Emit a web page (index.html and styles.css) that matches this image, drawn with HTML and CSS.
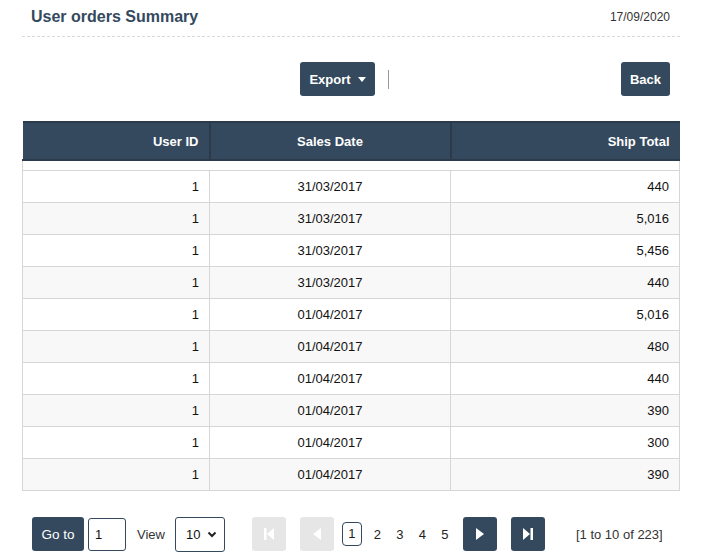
FILE: index.html
```html
<!DOCTYPE html>
<html>
<head>
<meta charset="utf-8">
<title>User orders Summary</title>
<link rel="stylesheet" href="styles.css">
</head>
<body>
<div class="page">
  <div class="title-bar">
    <h1 class="title">User orders Summary</h1>
    <span class="date">17/09/2020</span>
  </div>
  <div class="toolbar">
    <div class="tool-group">
      <button class="btn">Export <span class="caret"></span></button>
      <span class="sep"></span>
    </div>
    <button class="btn back">Back</button>
  </div>
  <table class="grid">
    <colgroup><col class="c1"><col class="c2"><col class="c3"></colgroup>
    <thead>
      <tr><th class="r">User ID</th><th class="c">Sales Date</th><th class="r">Ship Total</th></tr>
    </thead>
    <tbody>
      <tr class="spacer"><td colspan="3"></td></tr>
      <tr><td class="r">1</td><td class="c">31/03/2017</td><td class="r">440</td></tr>
      <tr><td class="r">1</td><td class="c">31/03/2017</td><td class="r">5,016</td></tr>
      <tr><td class="r">1</td><td class="c">31/03/2017</td><td class="r">5,456</td></tr>
      <tr><td class="r">1</td><td class="c">31/03/2017</td><td class="r">440</td></tr>
      <tr><td class="r">1</td><td class="c">01/04/2017</td><td class="r">5,016</td></tr>
      <tr><td class="r">1</td><td class="c">01/04/2017</td><td class="r">480</td></tr>
      <tr><td class="r">1</td><td class="c">01/04/2017</td><td class="r">440</td></tr>
      <tr><td class="r">1</td><td class="c">01/04/2017</td><td class="r">390</td></tr>
      <tr><td class="r">1</td><td class="c">01/04/2017</td><td class="r">300</td></tr>
      <tr><td class="r">1</td><td class="c">01/04/2017</td><td class="r">390</td></tr>
    </tbody>
  </table>
  <div class="pager">
    <button class="btn goto">Go to</button>
    <input class="page-input" type="text" value="1">
    <span class="view">View</span>
    <div class="select">10
      <svg class="chev" width="10" height="7" viewBox="0 0 10 7"><path d="M1.5 1.5 L5 5 L8.5 1.5" fill="none" stroke="#222" stroke-width="2"/></svg>
    </div>
    <button class="nav disabled first">
      <svg width="12" height="14" viewBox="0 0 12 14"><rect x="1" y="1" width="2.5" height="12" fill="#fff"/><path d="M11 1 L4 7 L11 13 Z" fill="#fff"/></svg>
    </button>
    <button class="nav disabled prev">
      <svg width="12" height="14" viewBox="0 0 12 14"><path d="M10 1 L2 7 L10 13 Z" fill="#fff"/></svg>
    </button>
    <div class="pages">
      <span class="pg active">1</span>
      <span class="pg">2</span>
      <span class="pg">3</span>
      <span class="pg">4</span>
      <span class="pg">5</span>
    </div>
    <button class="nav next">
      <svg width="12" height="14" viewBox="0 0 12 14"><path d="M2 1 L10 7 L2 13 Z" fill="#fff"/></svg>
    </button>
    <button class="nav last">
      <svg width="12" height="14" viewBox="0 0 12 14"><path d="M1 1 L8 7 L1 13 Z" fill="#fff"/><rect x="8.5" y="1" width="2.5" height="12" fill="#fff"/></svg>
    </button>
    <span class="count">[1 to 10 of 223]</span>
  </div>
</div>
</body>
</html>
```
FILE: styles.css
```css
* { box-sizing: border-box; }
body {
  margin: 0;
  background: #fff;
  font-family: "Liberation Sans", Arial, sans-serif;
  color: #222;
}
.page {
  padding: 0 31px 0 22px;
  width: 711px;
}
.title-bar {
  display: flex;
  justify-content: space-between;
  align-items: center;
  height: 37px;
  padding: 0 10px 2px 9px;
  border-bottom: 1px dashed #d9d9d9;
}
.title {
  margin: 0;
  font-size: 16px;
  font-weight: bold;
  color: #34495e;
}
.date {
  font-size: 12px;
  color: #333;
}
.toolbar {
  display: flex;
  justify-content: space-between;
  align-items: center;
  margin-top: 25px;
  padding-right: 10px;
}
.tool-group {
  display: flex;
  align-items: center;
  margin-left: 278px;
}
.btn {
  background: #34495e;
  color: #fff;
  border: 0;
  border-radius: 3px;
  height: 34px;
  font-family: "Liberation Sans", Arial, sans-serif;
  font-size: 13px;
  font-weight: bold;
  padding: 0 12px;
  display: inline-flex;
  align-items: center;
}
.caret {
  display: inline-block;
  width: 0; height: 0;
  border-left: 4px solid transparent;
  border-right: 4px solid transparent;
  border-top: 5px solid #fff;
  margin-left: 7px;
}
.toolbar .btn:first-child { width: 75px; justify-content: center; }
.sep {
  display: inline-block;
  width: 1px;
  height: 19px;
  background: #999;
  margin-left: 13px;
}
.back { width: 49px; justify-content: center; padding: 0; }
.grid {
  margin-top: 25px;
  width: 657px;
  border-collapse: collapse;
  table-layout: fixed;
  font-size: 13px;
}
.c1 { width: 187px; }
.c2 { width: 241px; }
.c3 { width: 229px; }
.grid th {
  background: #34495e;
  color: #fff;
  font-weight: bold;
  height: 38px;
  padding: 0 10px;
  border-right: 2px solid #2b3b4c;
  border-bottom: 2px solid #2b3b4c;
  border-top: 2px solid #2b3b4c;
}
.grid th:last-child { border-right: 0; }
.grid td {
  height: 32px;
  padding: 0 10px;
  border: 1px solid #d6d6d6;
  color: #111;
}
.grid tr.spacer td { height: 10px; border-top: 0; }
.grid tbody tr:nth-child(odd):not(.spacer) td { background: #f8f8f8; }
.r { text-align: right; }
.c { text-align: center; }
.pager {
  display: flex;
  align-items: center;
  margin-top: 26px;
  padding-left: 10px;
  font-size: 13px;
  color: #333;
}
.goto { width: 52px; justify-content: center; padding: 0; font-weight: normal; font-size: 13.5px; }
.page-input {
  width: 38px;
  height: 33px;
  margin-left: 4px;
  border: 1px solid #34495e;
  border-radius: 3px;
  padding: 0 6px;
  font-family: "Liberation Sans", Arial, sans-serif;
  font-size: 13px;
  color: #111;
}
.view { margin-left: 11px; }
.select {
  margin-left: 10px;
  width: 50px;
  height: 35px;
  border: 1px solid #34495e;
  border-radius: 3px;
  display: flex;
  align-items: center;
  justify-content: space-between;
  padding: 0 7px 0 10px;
  color: #111;
}
.nav {
  width: 34px;
  height: 34px;
  border: 0;
  border-radius: 3px;
  background: #34495e;
  display: inline-flex;
  align-items: center;
  justify-content: center;
  padding: 0;
}
.nav.disabled { background: #e6e6e6; }
.first { margin-left: 27px; }
.prev { margin-left: 14px; }
.pages {
  display: flex;
  align-items: center;
  margin-left: 8px;
  gap: 8.5px;
}
.pg {
  min-width: 14px;
  text-align: center;
  color: #222;
}
.pg.active {
  width: 20px;
  height: 24px;
  line-height: 22px;
  border: 1px solid #34495e;
  border-radius: 4px;
}
.next { margin-left: 11px; }
.last { margin-left: 14px; }
.count { margin-left: 31px; color: #333; }
```
